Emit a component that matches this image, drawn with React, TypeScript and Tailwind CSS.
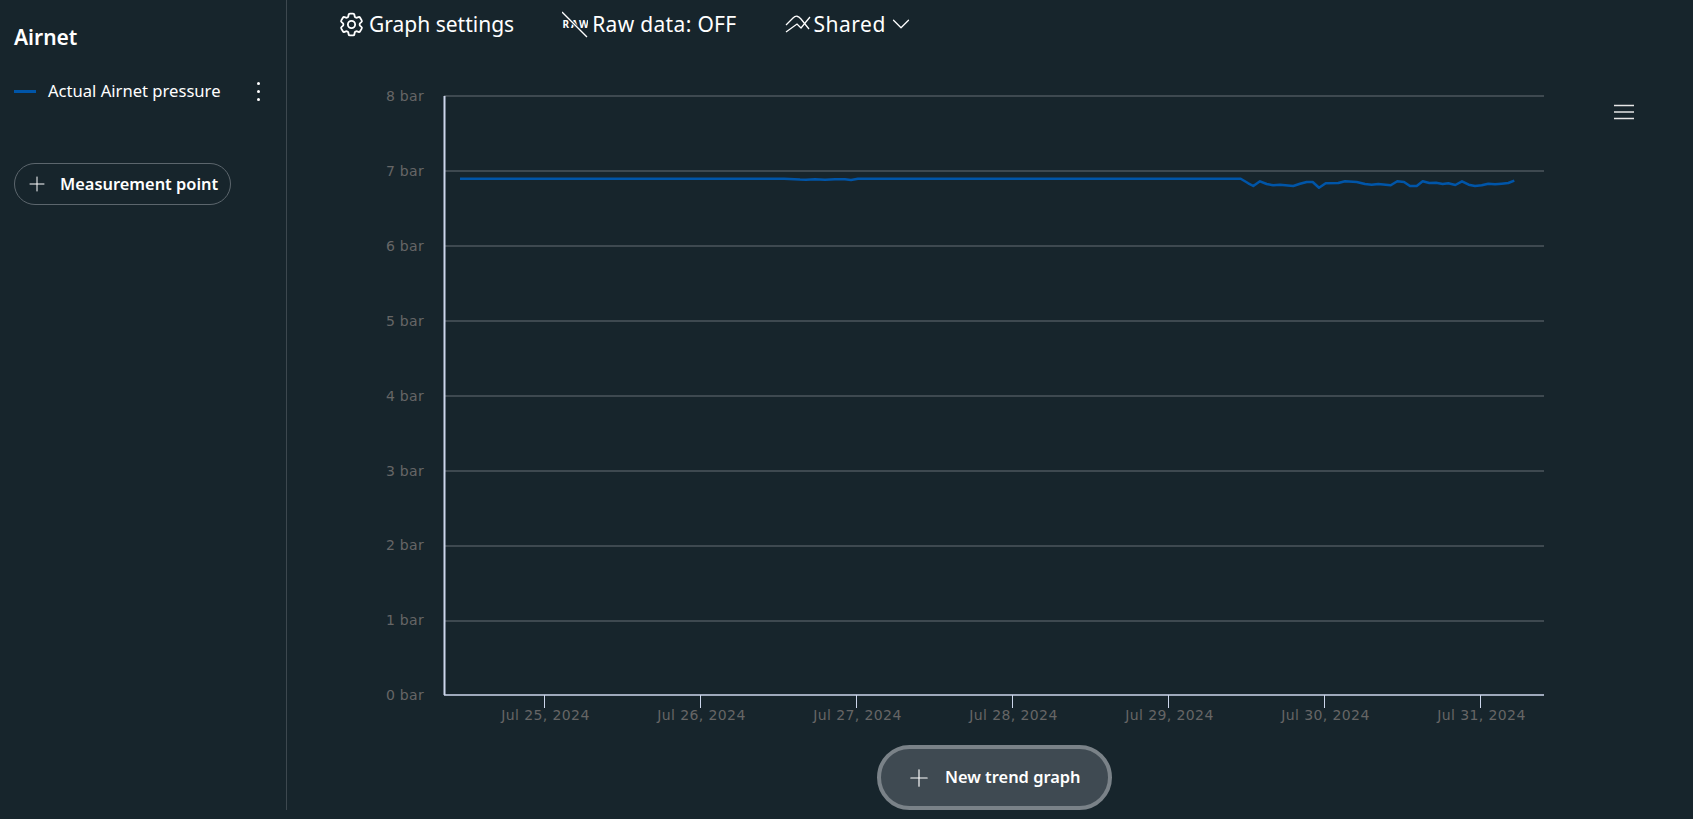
import { ChevronDown, Plus } from "lucide-react";
import { HiOutlineCog6Tooth } from "react-icons/hi2";

const gridLines = [96, 171, 246, 321, 396, 471, 546, 621];
const yLabels = ["8 bar", "7 bar", "6 bar", "5 bar", "4 bar", "3 bar", "2 bar", "1 bar", "0 bar"];
const ticks = [
  { x: 544.5, label: "Jul 25, 2024" },
  { x: 700.5, label: "Jul 26, 2024" },
  { x: 856.5, label: "Jul 27, 2024" },
  { x: 1012.5, label: "Jul 28, 2024" },
  { x: 1168.5, label: "Jul 29, 2024" },
  { x: 1324.5, label: "Jul 30, 2024" },
  { x: 1480.5, label: "Jul 31, 2024" },
];

// trace read off the reference, in page pixels
const tail = [
  [205, 310], [220, 318], [240, 304], [260, 312], [280, 316], [300, 314], [340, 318], [360, 311],
  [380, 306], [398, 306], [417, 323], [437, 310], [475, 309], [495, 304], [530, 306], [555, 312],
  [575, 314], [595, 312], [632, 316], [652, 304], [672, 306], [690, 318], [710, 318], [728, 304],
  [748, 309], [768, 308], [788, 312], [805, 310], [826, 315], [846, 304], [866, 314], [885, 318],
  [905, 316], [925, 311], [945, 313], [965, 311], [985, 309], [1003, 302],
].map(([x, y]) => `${(1180 + x / 3).toFixed(1)},${(80 + y / 3).toFixed(1)}`);

const trace = [
  "460,178.7", "784,178.7", "800,179.6", "806,179.8", "815,179.3", "825,179.8", "835,179.3", "845,179.3", "851,179.9", "858,178.8",
  "1240.7,178.7",
  ...tail,
].join(" ");

const RawOffIcon = () => (
  <svg width="26" height="30" viewBox="0 0 26 30" fill="none">
    <g fontSize="10" fontWeight="700" fill="#fff" fontFamily="'Noto Sans', sans-serif">
      <text x="0.5" y="19">R</text>
      <text x="9" y="19">A</text>
      <text x="17" y="19">W</text>
    </g>
    <path d="M0 3 L25 28" stroke="#17252c" strokeWidth="3" />
    <path d="M0 3 L25 28" stroke="#fff" strokeWidth="1.3" />
  </svg>
);

const SharedIcon = () => (
  <svg width="26" height="30" viewBox="0 0 26 30" fill="none" stroke="#fff" strokeWidth="1.3">
    <path d="M1 16 L8 9 Q12 5 16 10 L24 20" />
    <path d="M1 23 L12 15 L16 19 L25 8" />
  </svg>
);

const Chart = () => (
  <svg width="1406" height="690" viewBox="287 48 1406 690" className="block">
    {gridLines.map((y) => (
      <line key={y} x1="444" x2="1544" y1={y} y2={y} stroke="#4d565c" strokeWidth="1.5" />
    ))}
    <line x1="444.5" x2="444.5" y1="96" y2="695" stroke="#ccd6eb" strokeWidth="2" />
    <line x1="444" x2="1544" y1="695" y2="695" stroke="#ccd6eb" strokeWidth="1.5" />
    {ticks.map((t) => (
      <g key={t.x}>
        <line x1={t.x} x2={t.x} y1="695" y2="708" stroke="#ccd6eb" strokeWidth="1" />
        <text
          x={t.x + 1}
          y="720"
          textAnchor="middle"
          fontSize="14"
          letterSpacing="0.4"
          fill="#666"
          fontFamily="'DejaVu Sans', sans-serif"
        >
          {t.label}
        </text>
      </g>
    ))}
    {yLabels.map((label, i) => (
      <text
        key={label}
        x="424"
        y={101 + i * 74.9}
        textAnchor="end"
        fontSize="14"
        letterSpacing="0.3"
        fill="#666"
        fontFamily="'DejaVu Sans', sans-serif"
      >
        {label}
      </text>
    ))}
    <polyline points={trace} fill="none" stroke="#0055a8" strokeWidth="2.5" strokeLinejoin="round" />
    <g stroke="#e6e6e6" strokeWidth="1.5">
      <line x1="1614" x2="1634" y1="105.5" y2="105.5" />
      <line x1="1614" x2="1634" y1="112" y2="112" />
      <line x1="1614" x2="1634" y1="118.5" y2="118.5" />
    </g>
  </svg>
);

const App = () => {
  return (
    <div className="flex h-screen w-full overflow-hidden bg-[#17252c] font-['Noto_Sans',sans-serif] text-white">
      <aside className="h-[810px] w-[287px] shrink-0 border-r border-[#3d484f] pl-[14px]">
        <h2 className="pt-[23px] text-[21px] leading-[28px] font-semibold">Airnet</h2>
        <div className="mt-[28px] flex h-6 items-center">
          <span className="h-[3px] w-[22px] bg-[#0055a8]" />
          <span className="ml-3 text-[16.6px]">Actual Airnet pressure</span>
          <span className="ml-[36px] flex flex-col gap-[5px]">
            <i className="size-[3px] rounded-full bg-white" />
            <i className="size-[3px] rounded-full bg-white" />
            <i className="size-[3px] rounded-full bg-white" />
          </span>
        </div>
        <button className="mt-[60px] flex h-[42px] w-[217px] items-center rounded-full border border-[#5c666d] pl-[10px]">
          <Plus size={24} strokeWidth={1} />
          <span className="ml-[11px] text-[16.4px] font-semibold">Measurement point</span>
        </button>
      </aside>
      <main className="flex min-w-0 flex-1 flex-col">
        <div className="flex h-12 items-center pl-[50px] text-[21px]">
          <HiOutlineCog6Tooth size={29} />
          <span className="mt-[2px] ml-[3px]">Graph settings</span>
          <span className="ml-[48px]">
            <RawOffIcon />
          </span>
          <span className="mt-[2px] ml-[4px] tracking-[0.33px]">Raw data: OFF</span>
          <span className="ml-[48px]">
            <SharedIcon />
          </span>
          <span className="mt-[2px] ml-[3px] tracking-[0.5px]">Shared</span>
          <ChevronDown size={30} strokeWidth={1} />
        </div>
        <Chart />
        <div className="mt-[7px] flex justify-center pl-[9px]">
          <button className="flex h-[65px] w-[235px] items-center rounded-full border-4 border-[#7a8288] bg-[#3f4a52] pl-[24px]">
            <Plus size={28} strokeWidth={1} />
            <span className="ml-[12px] text-[16.4px] font-semibold">New trend graph</span>
          </button>
        </div>
      </main>
    </div>
  );
};

export default App;
